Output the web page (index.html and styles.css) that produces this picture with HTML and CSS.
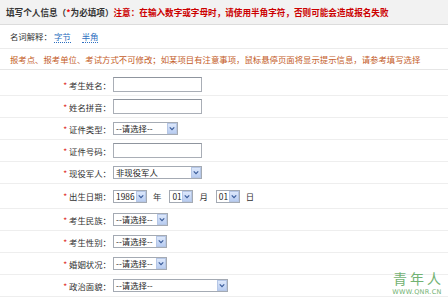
FILE: index.html
```html
<!DOCTYPE html>
<html lang="zh-CN">
<head>
<meta charset="UTF-8" />
<title>填写个人信息</title>
<link rel="stylesheet" href="styles.css">
</head>
<body>

<div class="head">
  <b>填写个人信息（<span class="req">*</span>为必填项）</b><b class="warn">注意：在输入数字或字母时，请使用半角字符，否则可能会造成报名失败</b>
</div>
<div class="terms">
  名词解释：<span class="term">字节</span><span class="term">半角</span>
</div>
<div class="notice">报考点、报考单位、考试方式不可修改；如某项目有注意事项，鼠标悬停页面将显示提示信息，请参考填写选择</div>

<div class="form">
  <!-- 考生姓名 -->
  <div class="row">
    <label><i>*</i> 考生姓名：</label>
    <input type="text" class="txt" />
  </div>
  <div class="row">
    <label><i>*</i> 姓名拼音：</label>
    <input type="text" class="txt" />
  </div>
  <div class="row">
    <label><i>*</i> 证件类型：</label>
    <span class="sel w65"><span class="val">--请选择--</span><span class="arr"><svg viewBox="0 0 8 6"><path d="M1 1.5 L4 4.5 L7 1.5" /></svg></span></span>
  </div>
  <div class="row">
    <label><i>*</i> 证件号码：</label>
    <input type="text" class="txt" />
  </div>
  <div class="row">
    <label><i>*</i> 现役军人：</label>
    <span class="sel w89"><span class="val">非现役军人</span><span class="arr"><svg viewBox="0 0 8 6"><path d="M1 1.5 L4 4.5 L7 1.5" /></svg></span></span>
  </div>
  <!-- 出生日期 -->
  <div class="row tall">
    <label><i>*</i> 出生日期：</label>
    <span class="sel w34"><span class="val">1986</span><span class="arr"><svg viewBox="0 0 8 6"><path d="M1 1.5 L4 4.5 L7 1.5" /></svg></span></span>
    <span class="unit">年</span>
    <span class="sel w24"><span class="val">01</span><span class="arr"><svg viewBox="0 0 8 6"><path d="M1 1.5 L4 4.5 L7 1.5" /></svg></span></span>
    <span class="unit">月</span>
    <span class="sel w24"><span class="val">01</span><span class="arr"><svg viewBox="0 0 8 6"><path d="M1 1.5 L4 4.5 L7 1.5" /></svg></span></span>
    <span class="unit">日</span>
  </div>
  <div class="row">
    <label><i>*</i> 考生民族：</label>
    <span class="sel w55"><span class="val">--请选择--</span><span class="arr"><svg viewBox="0 0 8 6"><path d="M1 1.5 L4 4.5 L7 1.5" /></svg></span></span>
  </div>
  <div class="row">
    <label><i>*</i> 考生性别：</label>
    <span class="sel w54"><span class="val">--请选择--</span><span class="arr"><svg viewBox="0 0 8 6"><path d="M1 1.5 L4 4.5 L7 1.5" /></svg></span></span>
  </div>
  <div class="row">
    <label><i>*</i> 婚姻状况：</label>
    <span class="sel w54"><span class="val">--请选择--</span><span class="arr"><svg viewBox="0 0 8 6"><path d="M1 1.5 L4 4.5 L7 1.5" /></svg></span></span>
  </div>
  <div class="row">
    <label><i>*</i> 政治面貌：</label>
    <span class="sel w115"><span class="val">--请选择--</span><span class="arr"><svg viewBox="0 0 8 6"><path d="M1 1.5 L4 4.5 L7 1.5" /></svg></span></span>
  </div>
</div>

<!-- 水印 -->
<div class="mark">
  <div class="mark-cn">青年人</div>
  <div class="mark-en">WWW.QNR.CN</div>
</div>

</body>
</html>
```

FILE: styles.css
```css
body {
  margin: 0;
  padding: 0;
  font-family: "Noto Sans CJK SC", "Liberation Sans", sans-serif;
  font-size: 8.4px;
  color: #333;
  background: #fff;
  position: relative;
  overflow: hidden;
  height: 298px;
}
.head {
  height: 24px;
  line-height: 24px;
  padding-left: 6px;
  background: #f2f2f2;
  border-bottom: 1px solid #dcdcdc;
  font-size: 8.6px;
  white-space: nowrap;
}
.head b {
  color: #333;
}
.head .req {
  color: #e00;
}
.head .warn {
  color: #c00;
}
.terms {
  height: 23px;
  line-height: 23px;
  padding-left: 10px;
  border-bottom: 1px solid #ececec;
  color: #333;
}
.term {
  color: #2e6fc0;
  border-bottom: 1px dotted #2e6fc0;
  margin-left: 2px;
  margin-right: 9px;
}
.notice {
  height: 20px;
  line-height: 20px;
  padding-left: 10px;
  color: #c45c28;
  border-bottom: 1px solid #e6e6e6;
  white-space: nowrap;
}
.form {
  padding-top: 4px;
}
.row {
  display: flex;
  align-items: center;
  height: 21px;
  border-bottom: 1px solid #eeeeee;
}
.row.tall {
  height: 24px;
}
.row label {
  width: 111px;
  text-align: right;
  color: #333;
}
.row label i {
  font-style: normal;
  color: #e03030;
}
.txt {
  box-sizing: border-box;
  width: 89px;
  height: 15px;
  margin: 0 0 0 2px;
  padding: 0;
  border: 1px solid #a9aeb6;
  border-top-color: #8f959e;
  background: #fff;
}
.sel {
  box-sizing: border-box;
  display: flex;
  align-items: center;
  height: 13px;
  margin-left: 2px;
  border: 1px solid #a4aab3;
  background: #fff;
}
.sel .val {
  flex: 1;
  padding-left: 2px;
  line-height: 11px;
  white-space: nowrap;
  overflow: hidden;
  color: #222;
}
.sel .arr {
  box-sizing: border-box;
  width: 10px;
  height: 11px;
  display: flex;
  align-items: center;
  justify-content: center;
  background: linear-gradient(#dde8fb, #b9cdf1);
  border: 1px solid #b6c7e6;
}
.sel .arr svg {
  width: 6px;
  height: 5px;
  fill: none;
  stroke: #3b5c9a;
  stroke-width: 1.6;
}
.w24 { width: 24px; }
.w34 { width: 34px; }
.w54 { width: 54px; }
.w55 { width: 55px; }
.w65 { width: 65px; }
.w89 { width: 89px; }
.w115 { width: 115px; }
.unit {
  margin: 0 6px;
  color: #333;
}
.mark {
  position: absolute;
  left: 388px;
  top: 270px;
  width: 58px;
  text-align: center;
  color: #72b272;
  white-space: nowrap;
}
.mark-cn {
  font-size: 14px;
  line-height: 17px;
  letter-spacing: 3px;
  padding-left: 3px;
}
.mark-en {
  margin-top: 2px;
  font-family: "DejaVu Sans", sans-serif;
  font-size: 6.5px;
  line-height: 7px;
  letter-spacing: 0.3px;
}
```
